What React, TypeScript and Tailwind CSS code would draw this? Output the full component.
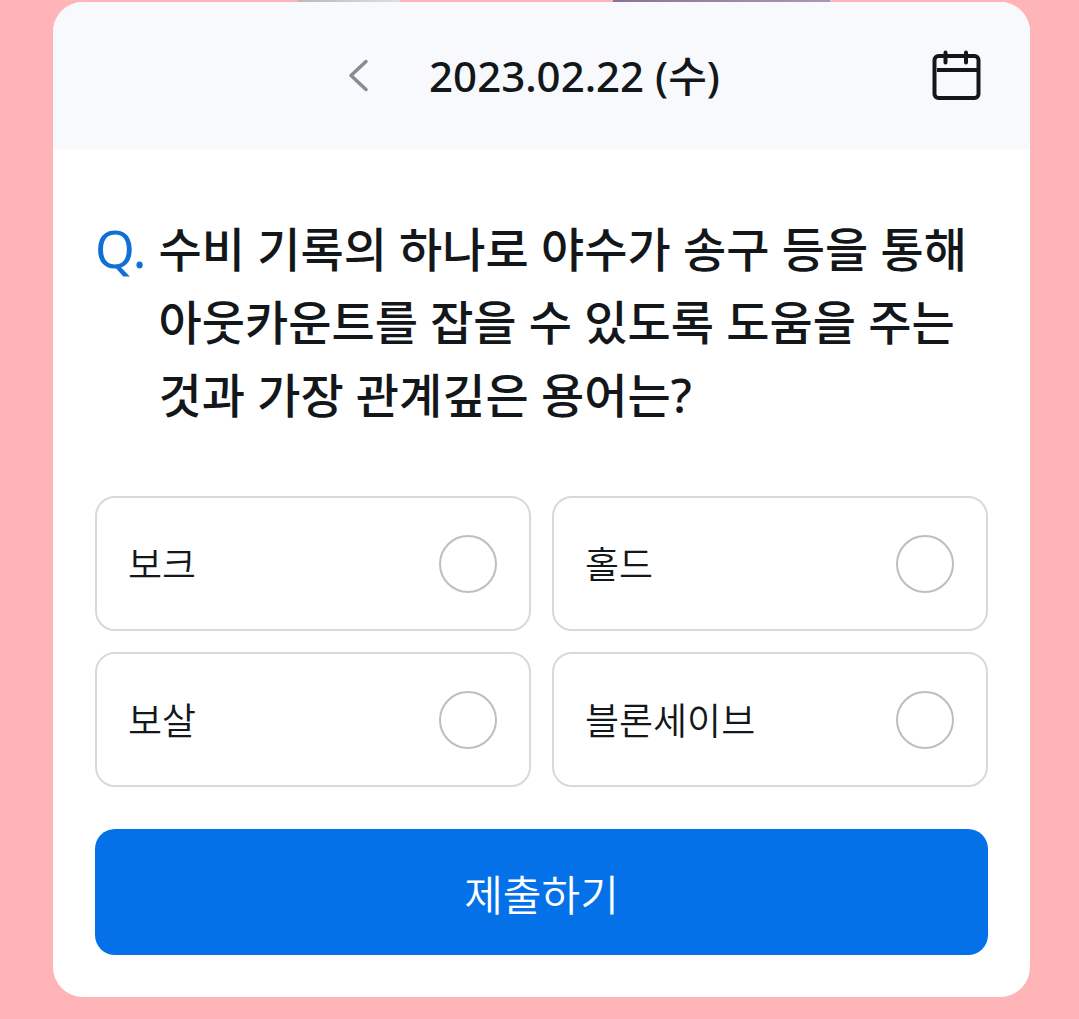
import { useState } from 'react';

const choices = ['보크', '홀드', '보살', '블론세이브'];

export default function App() {
  const [picked, setPicked] = useState('');
  return (
    <div className="min-h-screen bg-[#ffb4b7] font-['Noto_Sans','Noto_Sans_CJK_KR',sans-serif] text-[#14171a]">
      <div className="flex h-0.5">
        <div className="ml-[298px] w-[102px] bg-linear-to-r from-[#b9b9b9] to-[#e0dfe0]" />
        <div className="ml-[213px] w-[217px] bg-linear-to-r from-[#86749a] to-[#ab96b8]" />
      </div>
      <main className="ml-[53px] mr-[49px] overflow-hidden rounded-[30px] bg-white">
        <header className="grid h-[147px] grid-cols-[1fr_auto_1fr] items-center bg-[#f8f9fd] px-12">
          <div className="col-start-2 flex items-center gap-[60px] pr-4">
            <button type="button" aria-label="이전 날짜">
              <svg width="22" height="34" viewBox="0 0 22 34" fill="none" stroke="#858c95" strokeWidth="3.5" strokeLinecap="round" strokeLinejoin="round"><path d="M19 2.500 4 16.500l15 14" /></svg>
            </button>
            <h1 className="text-[42px] leading-[60px] font-medium">2023.02.22 (수)</h1>
          </div>
          <button type="button" aria-label="달력" className="justify-self-end">
            <svg width="50" height="52" viewBox="0 0 50 52" fill="none" stroke="#14171a" strokeWidth="4" strokeLinecap="round"><rect x="2.500" y="6" width="44" height="42" rx="4" /><path d="M13.500 2.500v10M34 2.500v10" /><path d="M5 20h40" strokeLinecap="butt" /></svg>
          </button>
        </header>
        <form className="px-[42px] pt-16 pb-[42px]" onSubmit={(e) => e.preventDefault()}>
          <fieldset>
            <legend className="flex gap-3">
              <span className="text-[51px] leading-[70px] text-[#126fd6]">Q.</span>
              <span className="text-[47px] leading-[73px] font-medium">수비 기록의 하나로 야수가 송구 등을 통해<br />아웃카운트를 잡을 수 있도록 도움을 주는<br />것과 가장 관계깊은 용어는?</span>
            </legend>
            <div className="mt-16 grid grid-cols-2 gap-[21px]">
              {choices.map((c) => (
                <label key={c} className="flex h-[135px] items-center justify-between rounded-[20px] border-2 border-[#d6dadd] pr-8 pl-[31px] font-['Noto_Sans_CJK_KR',sans-serif] text-[37px] font-[350]">
                  {c}
                  <input type="radio" name="answer" value={c} checked={picked === c} onChange={() => setPicked(c)} className="size-[58px] appearance-none rounded-full border-2 border-[#b9c0c5] checked:border-[16px] checked:border-[#0471e9]" />
                </label>
              ))}
            </div>
          </fieldset>
          <button type="submit" className="mt-[42px] h-[126px] w-full rounded-[20px] bg-[#0471e9] font-['Noto_Sans_CJK_KR',sans-serif] text-[42px] font-[350] text-white">제출하기</button>
        </form>
      </main>
    </div>
  );
}
